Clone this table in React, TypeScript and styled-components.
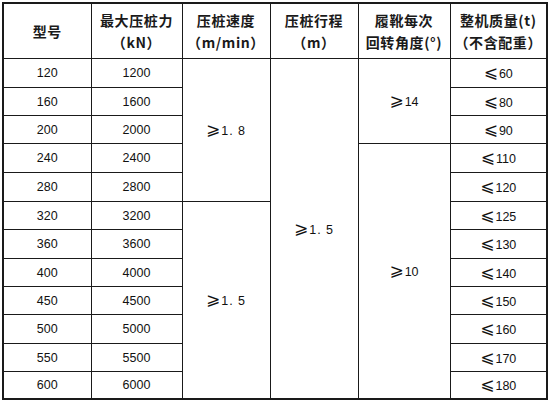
import styled, { createGlobalStyle } from "styled-components";

const GlobalStyle = createGlobalStyle`
  html, body {
    margin: 0;
    padding: 0;
    background: #fff;
  }
  body {
    width: 550px;
    height: 400px;
    overflow: hidden;
  }
`;

const Page = styled.div`
  padding: 2px 0 0 2px;
`;

const Table = styled.table`
  border-collapse: collapse;
  table-layout: fixed;
  width: 544px;
  border: 2px solid #1a1a1a;
  color: #111;
  font-family: "Liberation Sans", "DejaVu Sans", sans-serif;
`;

const HeadCell = styled.th`
  border: 1px solid #1a1a1a;
  height: 54px;
  padding: 0;
  font-family: "Noto Sans CJK SC", "DejaVu Sans", sans-serif;
  font-size: 14px;
  font-weight: 700;
  letter-spacing: 0.6px;
  line-height: 22px;
  text-align: center;
  vertical-align: middle;
  color: #1a1a1a;
`;

const Cell = styled.td<{ $h?: number }>`
  border: 1px solid #1a1a1a;
  padding: 0;
  height: ${(p) => (p.$h ? `${p.$h}px` : "auto")};
  font-size: 12.5px;
  line-height: 16px;
  text-align: center;
  vertical-align: middle;
  white-space: nowrap;
`;

const Sym = styled.span`
  font-family: "DejaVu Sans", sans-serif;
  font-size: 17px;
  line-height: 16px;
  margin-right: 1px;
`;

const Dec = styled.span`
  letter-spacing: 1px;
`;

type Row = {
  model: string;
  force: string;
  mass: string;
  h: number;
};

const rows: Row[] = [
  { model: "120", force: "1200", mass: "60", h: 28 },
  { model: "160", force: "1600", mass: "80", h: 27 },
  { model: "200", force: "2000", mass: "90", h: 27 },
  { model: "240", force: "2400", mass: "110", h: 28 },
  { model: "280", force: "2800", mass: "120", h: 28 },
  { model: "320", force: "3200", mass: "125", h: 27 },
  { model: "360", force: "3600", mass: "130", h: 28 },
  { model: "400", force: "4000", mass: "140", h: 27 },
  { model: "450", force: "4500", mass: "150", h: 27 },
  { model: "500", force: "5000", mass: "160", h: 28 },
  { model: "550", force: "5500", mass: "170", h: 27 },
  { model: "600", force: "6000", mass: "180", h: 26 },
];

const App = () => {
  return (
    <Page>
      <GlobalStyle />
      <Table>
        <colgroup>
          <col style={{ width: 88 }} />
          <col style={{ width: 91 }} />
          <col style={{ width: 88 }} />
          <col style={{ width: 88 }} />
          <col style={{ width: 92 }} />
          <col style={{ width: 97 }} />
        </colgroup>
        <thead>
          <tr>
            <HeadCell>型号</HeadCell>
            <HeadCell>
              最大压桩力
              <br />
              （kN）
            </HeadCell>
            <HeadCell>
              压桩速度
              <br />
              （m/min）
            </HeadCell>
            <HeadCell>
              压桩行程
              <br />
              （m）
            </HeadCell>
            <HeadCell>
              履靴每次
              <br />
              回转角度(°)
            </HeadCell>
            <HeadCell>
              整机质量(t)
              <br />
              （不含配重）
            </HeadCell>
          </tr>
        </thead>
        <tbody>
          {rows.map((r, i) => (
            <tr key={r.model}>
              <Cell $h={r.h}>{r.model}</Cell>
              <Cell>{r.force}</Cell>
              {i === 0 && (
                <Cell rowSpan={5}>
                  <Sym>⩾</Sym>
                  <Dec>1. 8</Dec>
                </Cell>
              )}
              {i === 5 && (
                <Cell rowSpan={7}>
                  <Sym>⩾</Sym>
                  <Dec>1. 5</Dec>
                </Cell>
              )}
              {i === 0 && (
                <Cell rowSpan={12}>
                  <Sym>⩾</Sym>
                  <Dec>1. 5</Dec>
                </Cell>
              )}
              {i === 0 && (
                <Cell rowSpan={3}>
                  <Sym>⩾</Sym>14
                </Cell>
              )}
              {i === 3 && (
                <Cell rowSpan={9}>
                  <Sym>⩾</Sym>10
                </Cell>
              )}
              <Cell>
                <Sym>⩽</Sym>
                {r.mass}
              </Cell>
            </tr>
          ))}
        </tbody>
      </Table>
    </Page>
  );
};

export default App;
